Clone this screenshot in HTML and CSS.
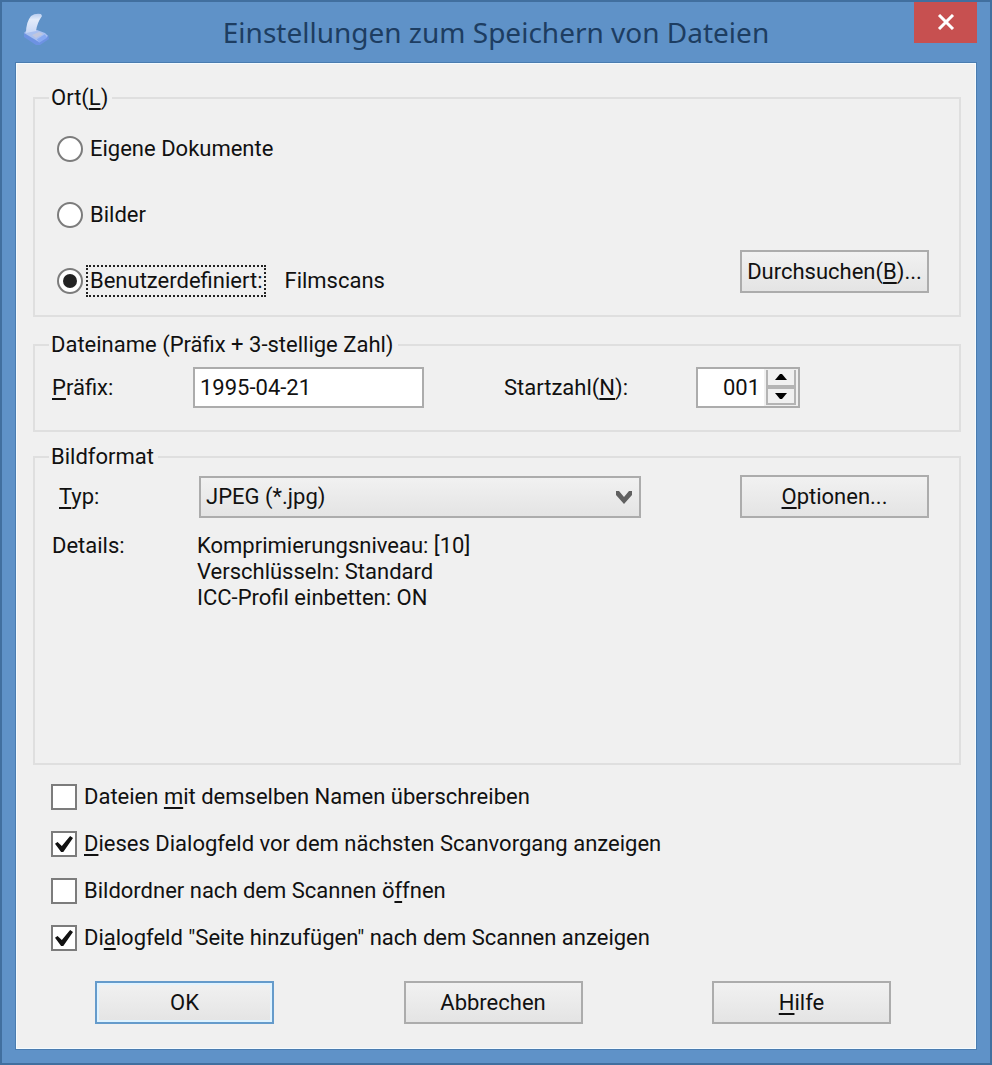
FILE: index.html
```html
<!DOCTYPE html>
<html lang="de">
<head>
    <meta charset="UTF-8">
    <meta name="viewport" content="width=device-width, initial-scale=1.0">
    <title>Einstellungen zum Speichern von Dateien</title>
    <link rel="stylesheet" href="styles.css">
</head>
<body>
    <div class="window">
        <header class="titlebar">
            <svg class="app-icon" viewBox="0 0 28 34" aria-hidden="true">
                <defs>
                    <linearGradient id="lid" x1="0" y1="0" x2="0" y2="1">
                        <stop offset="0" stop-color="#b8cdf0"/>
                        <stop offset="0.3" stop-color="#e2ebfa"/>
                        <stop offset="1" stop-color="#c6d6f5"/>
                    </linearGradient>
                </defs>
                <path d="M1 20 L14 27 L25 22 L26 26 L17 32 L13 32 L1 24 Z" fill="#6d92e2"/>
                <path d="M1 20 L4 17 L14 17 L22 20 L25 23 L16 29 Z" fill="#a9c0f0"/>
                <path d="M9 22 L16 19 L20 21 L13 25 Z" fill="#c0c6de"/>
                <path d="M8 3 Q12 0 18 1 L19 3 Q14 10 13 18 L3 20 Q3 9 8 3 Z" fill="url(#lid)"/>
                <path d="M15 28 L23 23" stroke="#86a9f2" stroke-width="4"/>
            </svg>
            <h1>Einstellungen zum Speichern von Dateien</h1>
            <button class="close-btn" type="button" aria-label="Schließen">
                <svg viewBox="0 0 18 16"><path d="M2 1 L16 15 M16 1 L2 15" stroke="#fff" stroke-width="3"/></svg>
            </button>
        </header>

        <form class="client">
            <!-- Speicherort -->
            <fieldset class="group location">
                <legend>Ort(<u>L</u>)</legend>
                <div class="radio-list">
                    <div class="option">
                        <input type="radio" name="ort" id="ort-dokumente">
                        <label for="ort-dokumente">Eigene Dokumente</label>
                    </div>
                    <div class="option">
                        <input type="radio" name="ort" id="ort-bilder">
                        <label for="ort-bilder">Bilder</label>
                    </div>
                    <div class="option">
                        <input type="radio" name="ort" id="ort-custom" checked>
                        <label for="ort-custom" class="focused">Benutzerdefiniert:</label>
                        <span class="folder">Filmscans</span>
                    </div>
                </div>
                <button class="btn btn-side" type="button">Durchsuchen(<u>B</u>)...</button>
            </fieldset>

            <!-- Dateiname -->
            <fieldset class="group filename">
                <legend>Dateiname (Präfix + 3-stellige Zahl)</legend>
                <label class="prefix-label" for="prefix"><u>P</u>räfix:</label>
                <input class="text-box" type="text" id="prefix" value="1995-04-21">
                <label class="start-label" for="start">Startzahl(<u>N</u>):</label>
                <div class="spinner">
                    <input type="text" id="start" value="001">
                    <div class="spin-buttons">
                        <button type="button" aria-label="Erhöhen"><svg viewBox="0 0 12 6"><path d="M0 6 L5 0 L7 0 L12 6 Z"/></svg></button>
                        <button type="button" aria-label="Verringern"><svg viewBox="0 0 12 6"><path d="M0 0 L5 6 L7 6 L12 0 Z"/></svg></button>
                    </div>
                </div>
            </fieldset>

            <!-- Bildformat -->
            <fieldset class="group format">
                <legend>Bildformat</legend>
                <div class="format-row">
                    <label class="type-label" for="typ"><u>T</u>yp:</label>
                    <div class="select-wrap">
                        <select id="typ">
                            <option>JPEG (*.jpg)</option>
                        </select>
                        <svg viewBox="0 0 16 14"><path d="M0 1 L3 1 L8 7 L13 1 L16 1 L16 5 L8 14 L0 5 Z" fill="#606060"/></svg>
                    </div>
                    <button class="btn btn-side" type="button"><u>O</u>ptionen...</button>
                </div>
                <div class="details">
                    <span class="details-label">Details:</span>
                    <p>Komprimierungsniveau: [10]<br>Verschlüsseln: Standard<br>ICC-Profil einbetten: ON</p>
                </div>
            </fieldset>

            <div class="check-list">
                <div class="option">
                    <input type="checkbox" id="overwrite">
                    <label for="overwrite">Dateien <u>m</u>it demselben Namen überschreiben</label>
                </div>
                <div class="option">
                    <input type="checkbox" id="show-dialog" checked>
                    <label for="show-dialog"><u>D</u>ieses Dialogfeld vor dem nächsten Scanvorgang anzeigen</label>
                </div>
                <div class="option">
                    <input type="checkbox" id="open-folder">
                    <label for="open-folder">Bildordner nach dem Scannen ö<u>f</u>fnen</label>
                </div>
                <div class="option">
                    <input type="checkbox" id="add-page" checked>
                    <label for="add-page">Di<u>a</u>logfeld "Seite hinzufügen" nach dem Scannen anzeigen</label>
                </div>
            </div>

            <div class="actions">
                <button class="btn btn-default" type="button">OK</button>
                <button class="btn" type="button">Abbrechen</button>
                <button class="btn" type="button"><u>H</u>ilfe</button>
            </div>
        </form>
    </div>
</body>
</html>
```

FILE: styles.css
```css
* {
    margin: 0;
    padding: 0;
    box-sizing: border-box;
}
body {
    font-family: Roboto, "Liberation Sans", sans-serif;
    font-size: 22px;
    line-height: 28px;
    color: #111;
}
input, select, button {
    font: inherit;
    color: inherit;
}
u {
    text-underline-offset: 3px;
    text-decoration-thickness: 2px;
    text-decoration-skip-ink: none;
}
.window {
    min-height: 100vh;
    display: flex;
    flex-direction: column;
    background-color: #5f92c8;
    border: 2px solid #416f9f;
    padding: 0 13px 13px;
}
.titlebar {
    display: flex;
    align-items: flex-start;
    height: 60px;
}
.app-icon {
    width: 28px;
    height: 34px;
    margin: 11px 27px 0 8px;
}
.titlebar h1 {
    flex: 1;
    text-align: center;
    font-family: "Noto Sans", "Open Sans", sans-serif;
    font-size: 28px;
    font-weight: 400;
    line-height: 60px;
    color: #1d3d61;
}
.close-btn {
    width: 63px;
    height: 41px;
    background-color: #c75050;
    border: none;
}
.close-btn svg {
    width: 18px;
    height: 16px;
}
.client {
    flex: 1;
    background-color: #f0f0f0;
    border: 1px solid #4a7cb0;
    box-shadow: inset 0 0 0 1px #f4fbff;
    padding: 21px 15px 24px 17px;
}
.group {
    border: 2px solid #dfdfdf;
    padding: 0 30px 0 17px;
    margin-bottom: 14px;
}
.group legend {
    padding: 0 4px 0 2px;
    margin-left: -3px;
}
.location {
    display: flex;
    justify-content: space-between;
    align-items: flex-end;
    padding-top: 23px;
    padding-bottom: 20px;
}
.location .btn {
    margin-bottom: 2px;
}
.radio-list {
    display: flex;
    flex-direction: column;
    gap: 38px;
    padding-left: 5px;
}
.option {
    display: flex;
    align-items: center;
}
.option label {
    padding: 0 2px;
    margin-left: 5px;
}
.option .focused {
    outline: 2px dotted #222;
}
.folder {
    margin-left: 20px;
}
input[type="radio"],
input[type="checkbox"] {
    appearance: none;
    width: 26px;
    height: 26px;
    background-color: #fff;
    border: 2px solid #7c7c7c;
    display: grid;
    place-items: center;
}
input[type="radio"] {
    border-radius: 50%;
}
input[type="radio"]:checked::before {
    content: "";
    width: 14px;
    height: 14px;
    border-radius: 50%;
    background-color: #222;
}
input[type="checkbox"]:checked::before {
    content: "";
    width: 18px;
    height: 16px;
    background-color: #111;
    clip-path: polygon(0 48%, 14% 38%, 38% 62%, 84% 0, 100% 12%, 46% 100%, 34% 100%);
}
.btn {
    width: 179px;
    height: 43px;
    background: linear-gradient(#f1f1f1, #e4e4e4);
    border: 2px solid #acacac;
}
.btn-side {
    width: 189px;
    white-space: nowrap;
}
.btn-default {
    border-color: #659bcb;
    box-shadow: inset 0 0 0 2px #e0f3ff;
}
.filename {
    display: flex;
    align-items: center;
    padding-top: 8px;
    padding-bottom: 22px;
    margin-bottom: 11px;
}
.prefix-label {
    width: 141px;
}
.text-box {
    width: 231px;
    height: 41px;
    background-color: #fff;
    border: 2px solid #acacac;
    padding: 0 5px;
}
.start-label {
    width: 192px;
    margin-left: 80px;
}
.spinner {
    display: flex;
    width: 104px;
    height: 41px;
    background-color: #fff;
    border: 2px solid #acacac;
}
.spinner input {
    flex: 1;
    min-width: 0;
    border: none;
    background: none;
    text-align: right;
    padding-right: 4px;
}
.spin-buttons {
    display: flex;
    flex-direction: column;
    width: 34px;
    padding: 1px 2px;
    background-color: #f0f0f0;
}
.spin-buttons button {
    flex: 1;
    display: grid;
    place-items: center;
    background-color: #f0f0f0;
    border: 2px solid #b4b4b4;
}
.spin-buttons button:first-child {
    border-top: none;
}
.spin-buttons svg {
    width: 12px;
    height: 6px;
}
.format {
    min-height: 322px;
    padding-top: 4px;
    margin-bottom: 18px;
}
.format-row {
    display: flex;
    align-items: center;
}
.type-label {
    width: 141px;
    padding-left: 7px;
    margin-right: 6px;
}
.select-wrap {
    position: relative;
    width: 442px;
    margin-right: auto;
}
.select-wrap select {
    appearance: none;
    width: 100%;
    height: 42px;
    background: linear-gradient(#f1f1f1, #e4e4e4);
    border: 2px solid #acacac;
    border-radius: 0;
    padding: 0 5px;
}
.select-wrap svg {
    position: absolute;
    right: 9px;
    top: 14px;
    width: 16px;
    height: 14px;
    pointer-events: none;
}
.details {
    display: flex;
    line-height: 26px;
    margin-top: 15px;
}
.details-label {
    width: 145px;
}
.check-list {
    display: flex;
    flex-direction: column;
    gap: 19px;
    padding-left: 18px;
}
.actions {
    display: flex;
    justify-content: space-between;
    padding: 0 70px 0 62px;
    margin-top: 29px;
}
```
